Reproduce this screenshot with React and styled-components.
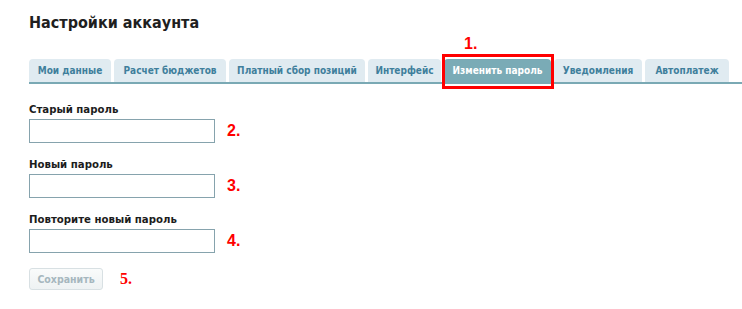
import styled, { createGlobalStyle } from "styled-components";

const GlobalStyle = createGlobalStyle`
  html, body {
    margin: 0;
    padding: 0;
    background: #ffffff;
  }
  body {
    font-family: "DejaVu Sans Condensed", "DejaVu Sans", sans-serif;
    color: #222222;
  }
`;

const Page = styled.div`
  width: 742px;
  height: 309px;
  padding-top: 12px;
  box-sizing: border-box;
  overflow: hidden;
`;

const Title = styled.h1`
  margin: 0 0 0 29px;
  font-size: 16px;
  line-height: 22px;
  font-weight: bold;
  color: #1f1f1f;
`;

const TabBar = styled.div`
  display: flex;
  gap: 3px;
  margin: 25px 0 0 29px;
  border-bottom: 2px solid #7aa9b4;
`;

const Tab = styled.div`
  position: relative;
  width: ${(p) => p.$width}px;
  height: 23px;
  display: flex;
  align-items: center;
  justify-content: center;
  border-radius: 4px 4px 0 0;
  font-size: 10px;
  font-weight: bold;
  white-space: nowrap;
  background: ${(p) => (p.$active ? "#7aabb6" : "#e0ebf1")};
  color: ${(p) => (p.$active ? "#ffffff" : "#3f7f9c")};

  ${(p) =>
    p.$marked &&
    `
    &::after {
      content: "";
      position: absolute;
      left: -2px;
      right: -3px;
      top: -5px;
      bottom: -7px;
      border: 3px solid #ff0000;
    }
  `}
`;

const Mark = styled.span`
  font-family: ${(p) =>
    p.$serif ? '"Liberation Serif", serif' : '"Liberation Sans", Arial, sans-serif'};
  font-size: 16px;
  font-weight: bold;
  color: #ff0000;
  line-height: 1;
`;

const TabMark = styled(Mark)`
  position: absolute;
  left: 20px;
  top: -23px;
`;

const Form = styled.div`
  display: flex;
  flex-direction: column;
  padding: 19px 0 0 29px;
`;

const Field = styled.div`
  display: flex;
  flex-direction: column;
  margin-bottom: 15px;
`;

const Label = styled.label`
  font-size: 11.3px;
  font-weight: bold;
  line-height: 14px;
  color: #1c1c1c;
  margin-bottom: 2px;
`;

const InputRow = styled.div`
  display: flex;
  align-items: center;
  gap: ${(p) => p.$gap || 12}px;
`;

const Input = styled.input`
  width: 186px;
  height: 24px;
  box-sizing: border-box;
  border: 1px solid #86a3ad;
  margin: 0;
  padding: 2px 4px;
  font-size: 12px;
  outline: none;
`;

const SaveButton = styled.button`
  width: 74px;
  height: 22px;
  box-sizing: border-box;
  border: 1px solid #d8e0e3;
  border-radius: 3px;
  background: linear-gradient(#f9fbfb, #eef2f3);
  color: #a6b7be;
  font-family: inherit;
  font-size: 10.5px;
  font-weight: bold;
  padding: 0;
  margin-top: 0;
`;

const tabs = [
  { label: "Мои данные", width: 82 },
  { label: "Расчет бюджетов", width: 112 },
  { label: "Платный сбор позиций", width: 136 },
  { label: "Интерфейс", width: 73 },
  { label: "Изменить пароль", width: 107, active: true },
  { label: "Уведомления", width: 88 },
  { label: "Автоплатеж", width: 84 },
];

const fields = [
  { label: "Старый пароль", mark: "2." },
  { label: "Новый пароль", mark: "3." },
  { label: "Повторите новый пароль", mark: "4." },
];

const App = () => {
  return (
    <>
      <GlobalStyle />
      <Page>
        <Title>Настройки аккаунта</Title>
        <TabBar>
          {tabs.map((t) => (
            <Tab
              key={t.label}
              $width={t.width}
              $active={t.active}
              $marked={t.active}
            >
              {t.active && <TabMark>1.</TabMark>}
              {t.label}
            </Tab>
          ))}
        </TabBar>
        <Form>
          {fields.map((f) => (
            <Field key={f.label}>
              <Label>{f.label}</Label>
              <InputRow>
                <Input type="password" />
                <Mark>{f.mark}</Mark>
              </InputRow>
            </Field>
          ))}
          <InputRow $gap={17}>
            <SaveButton disabled>Сохранить</SaveButton>
            <Mark $serif>5.</Mark>
          </InputRow>
        </Form>
      </Page>
    </>
  );
};

export default App;
